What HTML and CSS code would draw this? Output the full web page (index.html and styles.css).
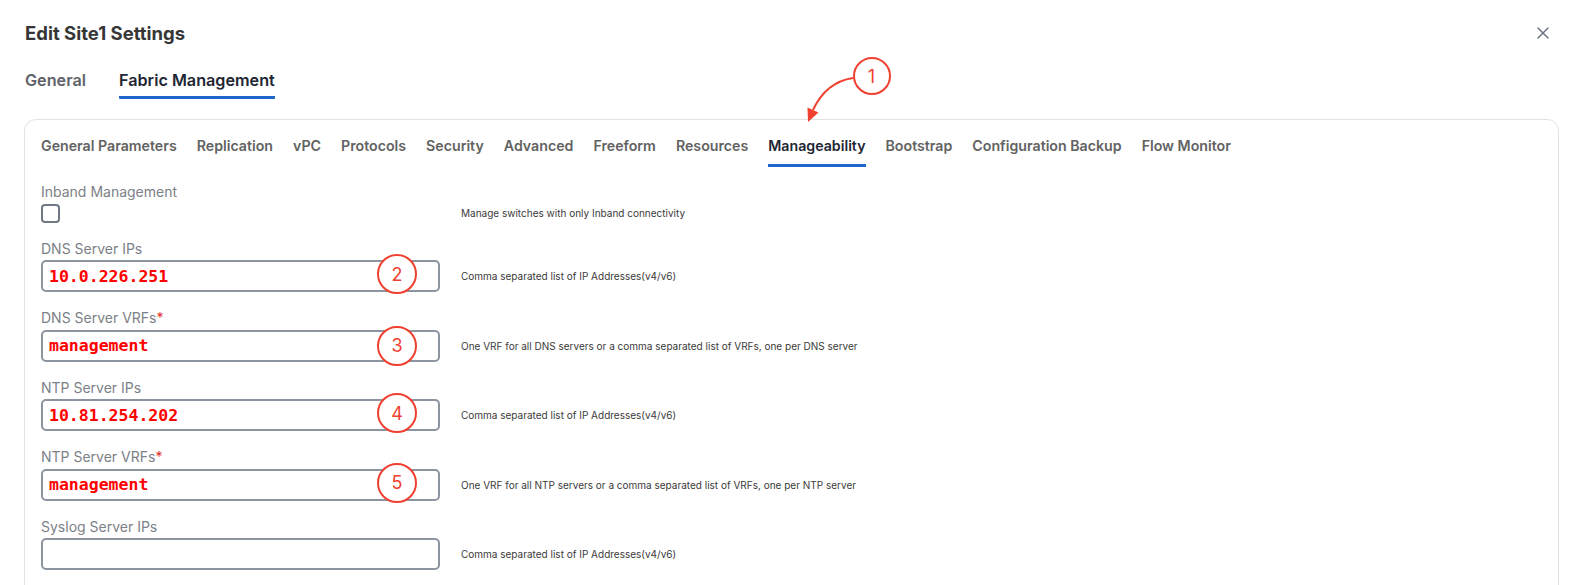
FILE: index.html
```html
<!DOCTYPE html>
<html lang="en">
<head>
    <meta charset="UTF-8">
    <meta name="viewport" content="width=device-width, initial-scale=1.0">
    <title>Edit Site1 Settings</title>
    <link rel="stylesheet" href="styles.css">
</head>
<body>
    <div class="modal">
        <div class="modal-header">
            <h1 class="modal-title">Edit Site1 Settings</h1>
            <button class="close-btn" aria-label="Close">
                <svg width="12" height="12" viewBox="0 0 12 12">
                    <path d="M1 1 L11 11 M11 1 L1 11" stroke="#6b7280" stroke-width="1.5" stroke-linecap="round"/>
                </svg>
            </button>
        </div>
        <div class="tabs">
            <div class="tab">General</div>
            <div class="tab active">Fabric Management</div>
        </div>
        <div class="card">
            <div class="subtabs">
                <div class="subtab">General Parameters</div>
                <div class="subtab">Replication</div>
                <div class="subtab">vPC</div>
                <div class="subtab">Protocols</div>
                <div class="subtab">Security</div>
                <div class="subtab">Advanced</div>
                <div class="subtab">Freeform</div>
                <div class="subtab">Resources</div>
                <div class="subtab active">Manageability</div>
                <div class="subtab">Bootstrap</div>
                <div class="subtab">Configuration Backup</div>
                <div class="subtab">Flow Monitor</div>
            </div>
            <div class="form">
                <div class="field">
                    <label class="field-label">Inband Management</label>
                    <div class="field-control"><span class="checkbox"></span></div>
                    <div class="field-help">Manage switches with only Inband connectivity</div>
                </div>
                <div class="field">
                    <label class="field-label">DNS Server IPs</label>
                    <div class="field-control">
                        <input class="text-input" type="text" value="10.0.226.251" readonly>
                        <span class="marker">2</span>
                    </div>
                    <div class="field-help">Comma separated list of IP Addresses(v4/v6)</div>
                </div>
                <div class="field">
                    <label class="field-label">DNS Server VRFs<span class="required">*</span></label>
                    <div class="field-control">
                        <input class="text-input" type="text" value="management" readonly>
                        <span class="marker marker-center">3</span>
                    </div>
                    <div class="field-help">One VRF for all DNS servers or a comma separated list of VRFs, one per DNS server</div>
                </div>
                <div class="field">
                    <label class="field-label">NTP Server IPs</label>
                    <div class="field-control">
                        <input class="text-input" type="text" value="10.81.254.202" readonly>
                        <span class="marker">4</span>
                    </div>
                    <div class="field-help">Comma separated list of IP Addresses(v4/v6)</div>
                </div>
                <div class="field">
                    <label class="field-label">NTP Server VRFs<span class="required">*</span></label>
                    <div class="field-control">
                        <input class="text-input" type="text" value="management" readonly>
                        <span class="marker">5</span>
                    </div>
                    <div class="field-help">One VRF for all NTP servers or a comma separated list of VRFs, one per NTP server</div>
                </div>
                <div class="field">
                    <label class="field-label">Syslog Server IPs</label>
                    <div class="field-control">
                        <input class="text-input" type="text" value="" readonly>
                    </div>
                    <div class="field-help">Comma separated list of IP Addresses(v4/v6)</div>
                </div>
            </div>
        </div>
    </div>

    <!-- annotation: callout 1 pointing at the Manageability tab -->
    <svg class="callout-arrow" width="1584" height="585" viewBox="0 0 1584 585">
        <path d="M853 78 Q826 82 813 110" fill="none" stroke="#f0402f" stroke-width="2"/>
        <polygon points="808,122 818.5,112.5 807.5,107.5" fill="#f0402f"/>
    </svg>
    <span class="marker marker-tab">1</span>
</body>
</html>
```

FILE: styles.css
```css
html, body {
    margin: 0;
    overflow: hidden;
}
body {
    font-family: Inter, "Noto Sans", Arial, sans-serif;
    background-color: #fff;
    color: #333;
    position: relative;
    height: 585px;
}
.modal {
    padding: 21px 25px 0 24px;
}
.modal-header {
    display: flex;
    justify-content: space-between;
    align-items: center;
    height: 24px;
}
.modal-title {
    margin: 0 0 0 1px;
    font-size: 18.5px;
    font-weight: 700;
    line-height: 24px;
    color: #363636;
}
.close-btn {
    background: none;
    border: none;
    padding: 0;
    margin-right: 10px;
    width: 12px;
    height: 12px;
    display: flex;
    cursor: pointer;
}
.tabs {
    display: flex;
    gap: 33px;
    margin-top: 25px;
    padding-left: 1px;
}
.tab {
    font-size: 16.2px;
    font-weight: 600;
    line-height: 20px;
    color: #5f6369;
    padding-bottom: 6px;
    border-bottom: 3px solid transparent;
}
.tab.active {
    color: #1e2633;
    border-bottom-color: #1f66cc;
    border-radius: 1px;
}
.card {
    margin-top: 20px;
    border: 1px solid #e2e2e2;
    border-radius: 12px;
    padding: 15.5px 16px 40px;
}
.subtabs {
    display: flex;
    gap: 20px;
}
.subtab {
    font-size: 14.2px;
    font-weight: 600;
    line-height: 20px;
    color: #626262;
    padding-bottom: 8px;
    border-bottom: 3px solid transparent;
}
.subtab.active {
    color: #1e2633;
    border-bottom-color: #1f66cc;
}
.form {
    margin-top: 15.5px;
}
.field {
    display: grid;
    grid-template-columns: 399px 1fr;
    column-gap: 21px;
    margin-bottom: 16px;
}
.field-label {
    grid-column: 1;
    font-size: 14px;
    line-height: 20px;
    color: #7c8187;
    margin-bottom: 1.5px;
}
.required {
    color: #e0302a;
}
.field-control {
    grid-column: 1;
    grid-row: 2;
    position: relative;
    display: flex;
}
.field-help {
    grid-column: 2;
    grid-row: 2;
    align-self: center;
    font-size: 10px;
    color: #3a3a3a;
}
.checkbox {
    display: block;
    width: 19px;
    height: 19px;
    box-sizing: border-box;
    border: 2px solid #6f7884;
    border-radius: 4px;
}
.text-input {
    width: 100%;
    height: 32px;
    box-sizing: border-box;
    border: 2px solid #8c959f;
    border-radius: 5px;
    padding: 0 6px;
    margin: 0;
    font-family: "DejaVu Sans Mono", "Liberation Mono", monospace;
    font-weight: 700;
    font-size: 16.5px;
    color: #ff0000;
    background: #fff;
    outline: none;
}
.marker {
    position: absolute;
    right: 23px;
    top: -6px;
    width: 40px;
    height: 40px;
    box-sizing: border-box;
    border: 2px solid #f0402f;
    border-radius: 50%;
    background: #fff;
    color: #f0402f;
    font-family: Inter, Arial, sans-serif;
    font-size: 18px;
    display: flex;
    align-items: center;
    justify-content: center;
}
.marker-center {
    top: -4px;
}
.marker-tab {
    right: auto;
    left: 852.5px;
    top: 57px;
    width: 38px;
    height: 38px;
}
.callout-arrow {
    position: absolute;
    top: 0;
    left: 0;
    pointer-events: none;
}
```
